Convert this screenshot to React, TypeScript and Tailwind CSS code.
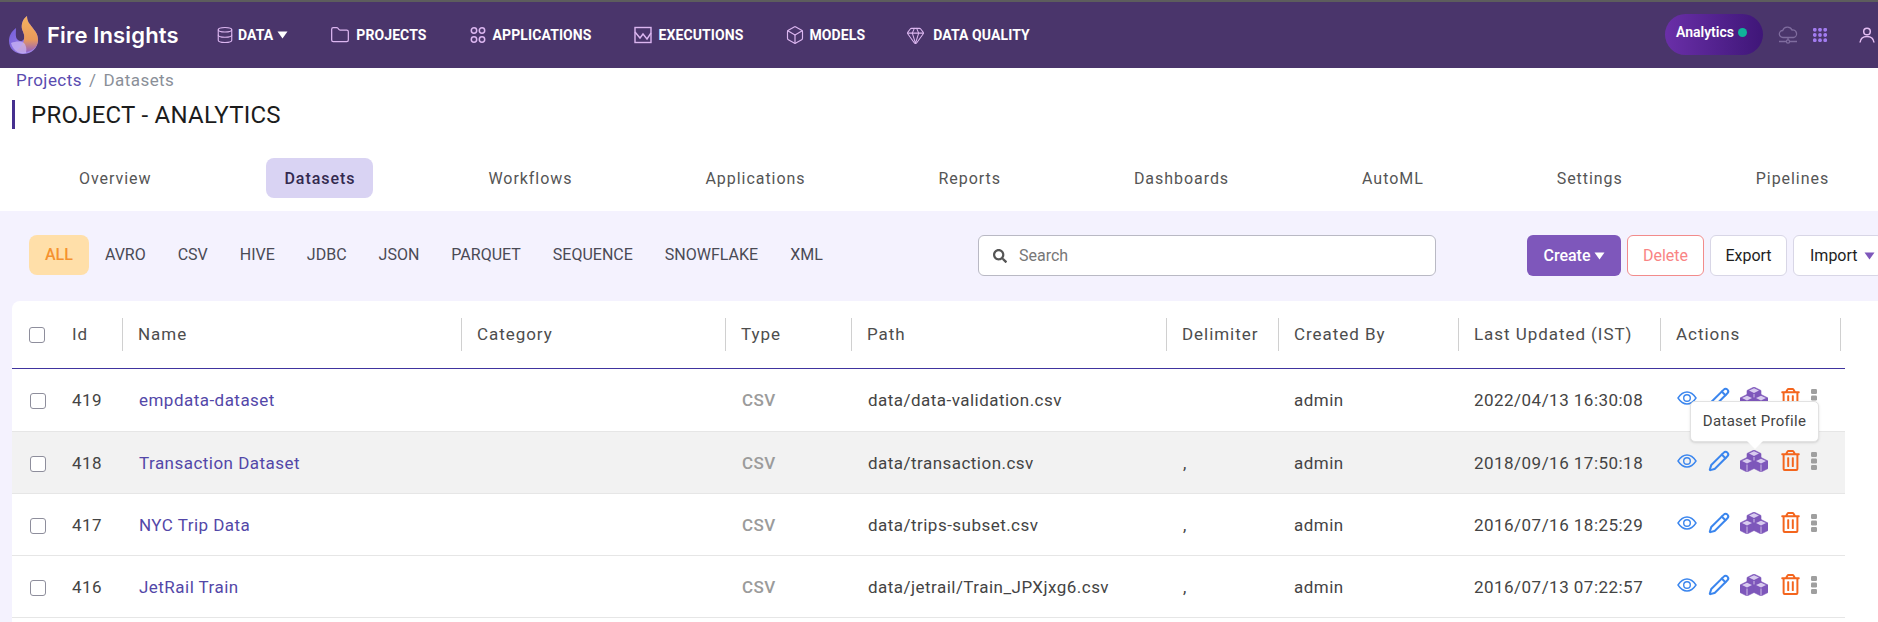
import React from "react";
import { Database, Folder, Box, Gem, Pencil } from "lucide-react";
import { FaRegTrashAlt, FaSearch } from "react-icons/fa";

const Caret = ({ className = "" }: { className?: string }) => (
  <svg viewBox="0 0 10 8" className={`w-[11px] h-2 ${className}`} fill="currentColor"><path d="M0 .5h10L5 7.5z" /></svg>
);

const Logo = () => (
  <svg viewBox="0 0 32 40" className="w-[32px] h-[40px]">
    <defs>
      <linearGradient id="fl" x1="0" y1="0" x2="0" y2="1"><stop offset="0" stopColor="#f6b25e" /><stop offset="0.65" stopColor="#e99a5b" /><stop offset="1" stopColor="#8f5fc4" /></linearGradient>
      <linearGradient id="bl" x1="0" y1="0" x2="1" y2="1"><stop offset="0" stopColor="#6a55d8" /><stop offset="1" stopColor="#a98be8" /></linearGradient>
    </defs>
    <path d="M8 13C3 17 1 21 1 26c0 8 6.500 13 14 13 8.500 0 15-6 15-14 0-6-3-9-6-13-2-3-5-5-5-11-4 3-6 8-5 13 1 3 3 6 2 10-1 2-4 3-6 1C7 23 8 18 8 13z" fill="url(#bl)" />
    <path d="M19 1c-4 3-6 8-5 13 1 3 3 6 2 10 0 4-3 8-8 12 12 4 22-2 22-11 0-6-3-9-6-13-2-3-5-5-5-11z" fill="url(#fl)" />
    <path d="M3 28c5-2 10-2 13 0 2 2 3 6 2 10-7 2-13-3-15-10z" fill="#c9b6f4" opacity=".75" />
  </svg>
);

const AppsIcon = () => (
  <svg viewBox="0 0 16 18" className="w-4 h-[18px]" fill="none" stroke="#dcb6f0" strokeWidth="1.500">
    <circle cx="4" cy="4.500" r="2.700" /><circle cx="12" cy="4.500" r="2.700" /><circle cx="4" cy="13.500" r="2.700" /><circle cx="12" cy="13.500" r="2.700" />
  </svg>
);

const ExecIcon = () => (
  <svg viewBox="0 0 18 18" className="w-[18px] h-[18px]" fill="none" stroke="#dcb6f0" strokeWidth="1.400">
    <rect x="1" y="1.500" width="16" height="15" /><path d="M1 6l5 6 3-4 4 5 4-6" />
  </svg>
);

const NavItem = ({ icon, label, className = "", gap = "gap-[6px]" }: { icon: React.ReactNode; label: string; className?: string; gap?: string }) => (
  <div className={`flex items-center ${gap} ${className}`}>
    {icon}
    <span className="text-[14px] font-bold text-white whitespace-nowrap tracking-[0.1px]">{label}</span>
  </div>
);

const Header = () => (
  <header className="h-[68px] bg-[#4a356b] border-t-2 border-[#5d5d5d] flex items-center shrink-0">
    <div className="flex items-center ml-[8px] w-[196px] shrink-0">
      <Logo />
      <span className="ml-[7px] text-[22px] font-semibold text-white font-['Inter'] tracking-[0.15px] whitespace-nowrap">Fire Insights</span>
    </div>
    <div className="flex items-center ml-[12px]">
      <NavItem gap="gap-[4px]" icon={<Database size={18} color="#dcb6f0" strokeWidth={1.5} />} label="DATA" />
      <Caret className="text-white ml-[4px]" />
    </div>
    <NavItem className="ml-[42px]" icon={<Folder size={20} color="#dcb6f0" strokeWidth={1.5} />} label="PROJECTS" />
    <NavItem className="ml-[43px]" gap="gap-[7px]" icon={<AppsIcon />} label="APPLICATIONS" />
    <NavItem className="ml-[42px]" gap="gap-[7px]" icon={<ExecIcon />} label="EXECUTIONS" />
    <NavItem className="ml-[41px]" gap="gap-[5px]" icon={<Box size={20} color="#dcb6f0" strokeWidth={1.4} />} label="MODELS" />
    <NavItem className="ml-[41px]" gap="gap-[8px]" icon={<Gem size={19} color="#dcb6f0" strokeWidth={1.3} />} label="DATA QUALITY" />
    <div className="ml-auto flex items-center shrink-0">
      <div className="w-[98px] h-[41px] rounded-full bg-gradient-to-r from-[#6a2fa8] to-[#3f1678] flex items-center pl-[11px] mb-[1px]">
        <span className="text-[14px] font-semibold text-white mb-[5px]">Analytics</span>
        <span className="w-[9px] h-[9px] rounded-full bg-[#10b39a] ml-[4px] mb-[4px]" />
      </div>
      <svg viewBox="0 0 20 18" className="w-[20px] h-[18px] ml-[15px]" fill="none" stroke="#7f6c9e" strokeWidth="1.300">
        <path d="M5 11.500a3.500 3.500 0 0 1-.3-7A5 5 0 0 1 14 4a3.800 3.800 0 0 1 1.500 7.500z" /><path d="M10 11.500V14M1 15.500h7M12 15.500h7" /><circle cx="10" cy="15.500" r="1.600" />
      </svg>
      <svg viewBox="0 0 14 14" className="w-[14px] h-[14px] ml-[15px]" fill="#a27cf0">
        {[1.800, 7, 12.200].flatMap((y) => [1.800, 7, 12.200].map((x) => <circle key={`${x}-${y}`} cx={x} cy={y} r="1.900" />))}
      </svg>
      <svg viewBox="0 0 16 16" className="w-4 h-4 ml-[32px] mr-[3px]" fill="none" stroke="#e3bdf2" strokeWidth="1.500">
        <circle cx="8" cy="4.500" r="3.300" /><path d="M1 15.500c.5-4 3.500-6 7-6s6.500 2 7 6" />
      </svg>
    </div>
  </header>
);

const tabs = ["Overview", "Datasets", "Workflows", "Applications", "Reports", "Dashboards", "AutoML", "Settings", "Pipelines"];
const filters = ["ALL", "AVRO", "CSV", "HIVE", "JDBC", "JSON", "PARQUET", "SEQUENCE", "SNOWFLAKE", "XML"];
const cols = "grid grid-cols-[48px_62px_339px_264px_126px_315px_112px_180px_202px_185px] w-[1833px]";

const headers = ["Id", "Name", "Category", "Type", "Path", "Delimiter", "Created By", "Last Updated (IST)", "Actions"];
const rows = [
  ["419", "empdata-dataset", "CSV", "data/data-validation.csv", "", "admin", "2022/04/13 16:30:08"],
  ["418", "Transaction Dataset", "CSV", "data/transaction.csv", ",", "admin", "2018/09/16 17:50:18"],
  ["417", "NYC Trip Data", "CSV", "data/trips-subset.csv", ",", "admin", "2016/07/16 18:25:29"],
  ["416", "JetRail Train", "CSV", "data/jetrail/Train_JPXjxg6.csv", ",", "admin", "2016/07/13 07:22:57"],
];

const Check = () => <span className="block w-4 h-4 rounded-[3px] border border-[#8e8e9c] bg-white" />;

const Cube = ({ cx, y }: { cx: number; y: number }) => (
  <g>
    <path d={`M${cx} ${y}l7 3.500v7.500l-7 3.500-7-3.500v-7.500z`} fill="#7e57bb" stroke="#7e57bb" strokeWidth=".6" strokeLinejoin="round" />
    <path d={`M${cx} ${y + 1.200}l5 2.400-5 2.400-5-2.400z`} fill="#d9ccef" />
    <path d={`M${cx} ${y + 7}v7`} stroke="#f1ecf9" strokeWidth=".7" />
  </g>
);

const Actions = () => (
  <div className="flex items-center pl-[17px] pb-[6px]">
    <svg viewBox="0 0 20 14" className="w-5 h-[14px]" fill="none" stroke="#3b86ee" strokeWidth="1.400">
      <path d="M1 7c2.500-3.800 5.500-6 9-6s6.500 2.200 9 6c-2.500 3.800-5.500 6-9 6S3.500 10.800 1 7z" /><circle cx="10" cy="7" r="3.300" />
    </svg>
    <Pencil size={22} color="#3b86ee" strokeWidth={2.2} className="ml-[11px]" />
    <svg viewBox="0 0 28 22" className="w-[28px] h-[22px] ml-[10px]">
      <Cube cx={14} y={0} />
      <Cube cx={7} y={7.500} />
      <Cube cx={21} y={7.500} />
    </svg>
    <FaRegTrashAlt size={21} color="#f4651d" className="ml-[12px]" />
    <svg viewBox="0 0 6 18" className="w-[6px] h-[18px] ml-[10px]" fill="#9f9f9f">
      <rect width="6" height="5" rx="1.200" /><rect y="6.500" width="6" height="5" rx="1.200" /><rect y="13" width="6" height="5" rx="1.200" />
    </svg>
  </div>
);

export default function App() {
  return (
    <div className="w-[1878px] h-[622px] overflow-hidden bg-white flex flex-col font-['Roboto',sans-serif] relative">
      <Header />
      <nav className="h-[21px] pl-4 flex items-center gap-[7px] text-[17px] tracking-[0.45px] shrink-0 mt-[2px]">
        <span className="text-[#5a4bb0]">Projects</span>
        <span className="text-[#8a8f98]">/</span>
        <span className="text-[#8a8f98]">Datasets</span>
      </nav>
      <div className="ml-3 mt-[9px] h-[29px] border-l-[3px] border-[#46308f] pl-4 flex items-center text-[24px] tracking-[0.25px] leading-none text-[#1c1c1c] shrink-0">PROJECT - ANALYTICS</div>
      <div className="flex gap-[97px] pl-[61px] mt-[29px] h-10 shrink-0">
        {tabs.map((t) => (
          <div key={t} className={`h-10 pt-[1px] px-[18px] flex items-center rounded-lg text-[16px] tracking-[0.95px] whitespace-nowrap ${t === "Datasets" ? "bg-[#d9d3f3] text-[#33294f] font-medium" : "text-[#555]"}`}>{t}</div>
        ))}
      </div>
      <div className="mt-[13px] flex-1 bg-[#f4f2fe] flex flex-col min-h-0">
        <div className="h-[90px] shrink-0 flex items-start pt-[24px] pl-[29px]">
          <div className="flex w-[949px] shrink-0">
            {filters.map((f) => (
              <div key={f} className={`h-10 px-4 flex items-center text-[16px] rounded-lg ${f === "ALL" ? "bg-[#ffdfa9] text-[#f5922f] font-medium" : "text-[#4a4a55]"}`}>{f}</div>
            ))}
          </div>
          <div className="w-[458px] h-[41px] shrink-0 bg-white border border-[#b9b9c4] rounded-[6px] flex items-center pl-[14px] gap-[12px]">
            <FaSearch size={14} color="#555" />
            <span className="text-[16px] text-[#777]">Search</span>
          </div>
          <div className="flex gap-[6px] ml-[91px] shrink-0 text-[16px]">
            <div className="w-[94px] h-[41px] bg-[#7e57bb] rounded-[6px] text-white font-medium flex items-center justify-center gap-[3px]">Create<Caret className="text-white" /></div>
            <div className="w-[77px] h-[41px] bg-white border border-[#f28b8b] rounded-[6px] text-[#f98484] flex items-center justify-center">Delete</div>
            <div className="w-[77px] h-[41px] bg-white border border-[#d8d6e6] rounded-[6px] text-[#1e1e1e] flex items-center justify-center">Export</div>
            <div className="w-[90px] h-[41px] bg-white border border-[#d8d6e6] rounded-[6px] text-[#1e1e1e] flex items-center pl-[16px] gap-[6px] shrink-0">Import<Caret className="text-[#7e57bb]" /></div>
          </div>
        </div>
        <div className="flex-1 ml-3 bg-white rounded-tl-lg min-h-0">
          <div className={`${cols} h-[68px] border-b border-[#40349f] items-center text-[17px] text-[#4d4d4d] tracking-[0.95px]`}>
            <div className="pl-[17px]"><Check /></div>
            {headers.map((h, i) => (
              <div key={h} className={`h-[33px] flex items-center whitespace-nowrap ${i === 0 ? "pl-[12px]" : "pl-[15px] border-l border-[#d0d0d0]"} ${i === 8 ? "border-r w-[181px]" : ""}`}>{h}</div>
            ))}
          </div>
          {rows.map((r, idx) => (
            <div key={r[0]} className={`${cols} ${idx === 0 ? "h-[63px]" : "h-[62px]"} pt-[2px] items-center text-[17px] text-[#444] border-b border-[#e6e6e6] tracking-[0.47px] ${idx === 1 ? "bg-[#f2f2f2]" : ""}`}>
              <div className="pl-[18px]"><Check /></div>
              <div className="pl-[12px]">{r[0]}</div>
              <div className="pl-[17px] text-[#5347a8] whitespace-nowrap">{r[1]}</div>
              <div />
              <div className="pl-[17px] text-[#9b9b9b] font-medium">{r[2]}</div>
              <div className="pl-[17px] whitespace-nowrap">{r[3]}</div>
              <div className="pl-[17px]">{r[4]}</div>
              <div className="pl-[16px]">{r[5]}</div>
              <div className="pl-[16px] whitespace-nowrap">{r[6]}</div>
              <Actions />
            </div>
          ))}
        </div>
      </div>
      <div className="absolute left-[1690px] top-[401px] w-[129px] h-[41px] bg-white rounded-[5px] border border-[#e2e2e2] shadow-sm flex items-center justify-center text-[15px] text-[#444] tracking-[0.3px]">
        Dataset Profile
        <span className="absolute left-[56px] top-[39px] w-0 h-0 border-x-[8px] border-x-transparent border-t-[8px] border-t-white" />
      </div>
    </div>
  );
}
